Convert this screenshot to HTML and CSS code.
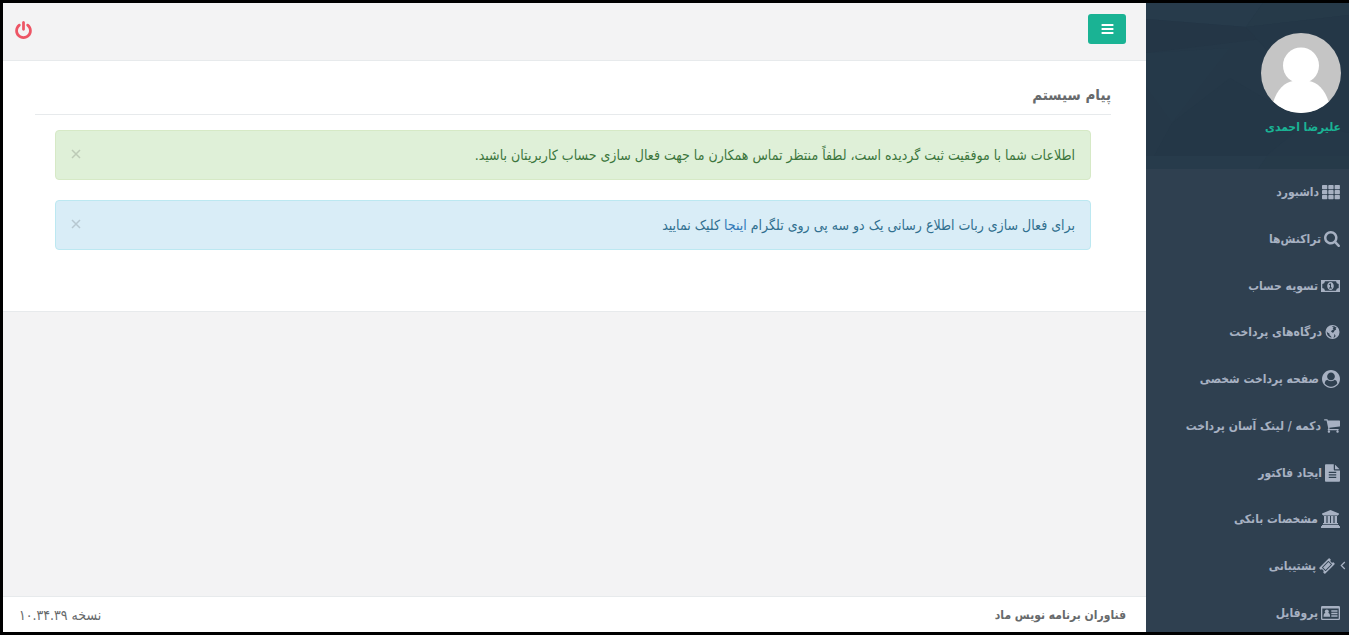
FILE: index.html
```html
<!DOCTYPE html>
<html lang="fa" dir="rtl">
<head>
  <meta charset="UTF-8">
  <meta name="viewport" content="width=device-width, initial-scale=1">
  <title>پیام سیستم</title>
  <link rel="stylesheet" href="styles.css">
</head>
<body>

  <aside class="sidebar">
    <div class="profile">
      <svg class="profile-bg" viewBox="0 0 203 166" preserveAspectRatio="none" aria-hidden="true">
        <rect width="203" height="166" fill="#253848"/>
        <path d="M0 0H117L100 24L0 16Z" fill="#273b4b"/>
        <path d="M117 0H203V12L100 24Z" fill="#263a49"/>
        <path d="M0 16L100 24L116 36L0 50Z" fill="#243646"/>
        <path d="M0 50L84 45L26 120L0 84Z" fill="#253949"/>
        <path d="M100 24L203 12V130L160 120L118 44Z" fill="#243747"/>
        <path d="M26 120L84 75L160 120L120 153H8Z" fill="#243747"/>
        <path d="M0 153H203V166H0Z" fill="#273b4b"/>
        <path d="M121 153H203V166H112Z" fill="#263a49"/>
      </svg>
      <svg class="avatar" viewBox="0 0 80 80" role="img" aria-label="علیرضا احمدی">
        <clipPath id="round"><circle cx="40" cy="40" r="40"/></clipPath>
        <g clip-path="url(#round)">
          <rect width="80" height="80" fill="#c5c5c5"/>
          <circle cx="40" cy="32.500" r="18" fill="#fff"/>
          <path d="M12 70C16 56 24 49 32 48H48C56 49 64 56 68 70V80H12Z" fill="#fff"/>
        </g>
      </svg>
      <a class="name" href="#">علیرضا احمدی</a>
    </div>

    <nav class="menu">
      <ul>
        <li><a href="#">
          <svg class="icon" viewBox="0 0 18 18"><rect x="0" y="2" width="5.300" height="4.200" rx=".7"/><rect x="6.300" y="2" width="5.300" height="4.200" rx=".7"/><rect x="12.600" y="2" width="5.300" height="4.200" rx=".7"/><rect x="0" y="7" width="5.300" height="4.200" rx=".7"/><rect x="6.300" y="7" width="5.300" height="4.200" rx=".7"/><rect x="12.600" y="7" width="5.300" height="4.200" rx=".7"/><rect x="0" y="12" width="5.300" height="4.200" rx=".7"/><rect x="6.300" y="12" width="5.300" height="4.200" rx=".7"/><rect x="12.600" y="12" width="5.300" height="4.200" rx=".7"/></svg>
          <span>داشبورد</span></a></li>
        <li><a href="#">
          <svg class="icon narrow" viewBox="64 128 1664 1664"><path d="M1216 832q0-185-131.500-316.500t-316.500-131.500-316.500 131.500-131.500 316.500 131.500 316.500 316.500 131.500 316.500-131.500 131.500-316.500zm512 832q0 52-38 90t-90 38q-54 0-90-38l-343-342q-179 124-399 124-143 0-273.500-55.500t-225-150-150-225-55.500-273.500 55.500-273.500 150-225 225-150 273.500-55.500 273.500 55.500 225 150 150 225 55.500 273.500q0 220-124 399l343 343q37 37 37 90z"/></svg>
          <span>تراکنش‌ها</span></a></li>
        <li><a href="#">
          <svg class="icon wide" viewBox="0 0 19 18"><path fill-rule="evenodd" d="M0 3H19V15H0ZM4 4.300Q3.700 6.800 1.300 7.100V10.900Q3.700 11.200 4 13.700H15Q15.300 11.200 17.700 10.900V7.100Q15.300 6.800 15 4.300Z"/><path fill-rule="evenodd" d="M9.500 5C11.400 5 12.800 6.800 12.800 9S11.400 13 9.500 13 6.200 11.200 6.200 9 7.600 5 9.500 5ZM9 6.500L7.700 7.600 8.300 8.300 9 7.800V10.500H8V11.400H11V10.500H10V6.500Z"/></svg>
          <span>تسویه حساب</span></a></li>
        <li><a href="#">
          <svg class="icon small" viewBox="0 0 16 16"><path fill-rule="evenodd" d="M8 .5A7.500 7.500 0 1 1 8 15.500A7.500 7.500 0 0 1 8 .5ZM7.200 1.900L9.800 1.800 12.500 3.400 11.300 4.200 12 5.400 10.200 6.300 9.300 8.300 8 8.800 6.300 7.200 7.900 5.900 9.200 5.200 8.100 4.300 9.300 3.400ZM1.800 7.300L3 8.700 4.700 9.700 4.900 11.300 6.600 12.700 6.900 14.200Q2 12.700 1.800 7.300ZM9.700 10.200L11.100 11.500 10.900 13.400 8.900 14.100 9.900 12.200Z"/></svg>
          <span>درگاه‌های پرداخت</span></a></li>
        <li><a href="#">
          <svg class="icon" viewBox="0 0 1792 1792"><path d="M1523 1339q-22-155-87.500-257.500t-184.500-118.500q-67 74-159.500 115.500t-195.500 41.500-195.500-41.500-159.500-115.500q-119 16-184.500 118.500t-87.500 257.500q106 150 271 237.500t356 87.500 356-87.500 271-237.500zm-243-699q0-159-112.500-271.500t-271.500-112.500-271.500 112.500-112.500 271.500 112.500 271.500 271.500 112.500 271.500-112.500 112.500-271.500zm512 256q0 182-71 347.500t-190.500 286-285.500 191.500-349 71q-182 0-348-71t-286-191-191-286-71-348 71-348 191-286 286-191 348-71 348 71 286 191 191 286 71 348z"/></svg>
          <span>صفحه پرداخت شخصی</span></a></li>
        <li><a href="#">
          <svg class="icon narrow" viewBox="64 128 1664 1664"><path d="M704 1536q0 52-38 90t-90 38-90-38-38-90 38-90 90-38 90 38 38 90zm896 0q0 52-38 90t-90 38-90-38-38-90 38-90 90-38 90 38 38 90zm128-1088v512q0 24-16.500 42.500t-40.500 21.500l-1044 122q13 60 13 70 0 16-24 64h920q26 0 45 19t19 45-19 45-45 19h-1024q-26 0-45-19t-19-45q0-11 8-31.500t16-36 21.500-40 15.500-29.500l-177-823h-204q-26 0-45-19t-19-45 19-45 45-19h256q16 0 28.500 6.500t19.500 15.500 13 24.500 8 26 5.500 29.500 4.500 26h1201q26 0 45 19t19 45z"/></svg>
          <span>دکمه / لینک آسان پرداخت</span></a></li>
        <li><a href="#">
          <svg class="icon small" viewBox="128 0 1536 1792"><path d="M1596 476q14 14 28 36h-472v-472q22 14 36 28zm-476 164h544v1056q0 40-28 68t-68 28h-1344q-40 0-68-28t-28-68v-1600q0-40 28-68t68-28h800v544q0 40 28 68t68 28zm160 736v-64q0-14-9-23t-23-9h-704q-14 0-23 9t-9 23v64q0 14 9 23t23 9h704q14 0 23-9t9-23zm0-256v-64q0-14-9-23t-23-9h-704q-14 0-23 9t-9 23v64q0 14 9 23t23 9h704q14 0 23-9t9-23zm0-256v-64q0-14-9-23t-23-9h-704q-14 0-23 9t-9 23v64q0 14 9 23t23 9h704q14 0 23-9t9-23z"/></svg>
          <span>ایجاد فاکتور</span></a></li>
        <li><a href="#">
          <svg class="icon wide" viewBox="0 0 19 18"><path d="M9.500 0L18 3.500V4.700H17V5.400H2V4.700H1V3.500ZM3 6H5.400V13H6.600V6H9V13H10V6H12.400V13H13.600V6H16V13H17V14.200H2V13H3ZM1 15H18V16L19 16.200V18H0V16.200L1 16Z"/></svg>
          <span>مشخصات بانکی</span></a></li>
        <li class="has-sub"><a href="#">
          <svg class="arrow" viewBox="0 0 6 9"><path d="M4.800 1L1.300 4.500 4.800 8" fill="none" stroke="currentColor" stroke-width="1.200"/></svg>
          <svg class="icon narrow" viewBox="0 0 17 17"><path fill-rule="evenodd" d="M10.200 .6Q10.800 0 11.400 .6L12.500 1.700A2 2 0 0 0 15.300 4.500L16.400 5.600Q17 6.200 16.400 6.800L6.800 16.400Q6.200 17 5.600 16.400L4.500 15.300A2 2 0 0 0 1.700 12.500L.6 11.400Q0 10.800 .6 10.200ZM9.500 3.500L3.500 9.500Q3 10 3.500 10.500L6.500 13.500Q7 14 7.500 13.500L13.500 7.500Q14 7 13.500 6.500L10.500 3.500Q10 3 9.500 3.500Z"/><path d="M10 4.300L12.700 7 7 12.700 4.300 10Z"/></svg>
          <span>پشتیبانی</span></a></li>
        <li><a href="#">
          <svg class="icon wide" viewBox="0 0 19 18"><path fill-rule="evenodd" d="M1.300 2H17.700Q19 2 19 3.200V14.800Q19 16 17.700 16H1.300Q0 16 0 14.800V3.200Q0 2 1.300 2ZM1.300 4.500V14.200Q1.300 14.700 1.800 14.700H17.200Q17.700 14.700 17.700 14.200V4.500Z"/><circle cx="5.800" cy="7.500" r="2"/><path d="M2.500 12.800Q2.500 9 4.400 9H7.200Q9.100 9 9.100 12.800ZM10.300 6.300H16.500V7.800H10.300ZM10.300 8.800H16.500V10.300H10.300ZM10.300 11.300H16.500V12.800H10.300Z"/></svg>
          <span>پروفایل</span></a></li>
      </ul>
    </nav>
  </aside>

  <div class="page">
    <header class="topbar">
      <button class="btn-menu" type="button" aria-label="منو">
        <svg viewBox="128 256 1536 1280"><path d="M1664 1344v128q0 26-19 45t-45 19h-1408q-26 0-45-19t-19-45v-128q0-26 19-45t45-19h1408q26 0 45 19t19 45zm0-512v128q0 26-19 45t-45 19h-1408q-26 0-45-19t-19-45v-128q0-26 19-45t45-19h1408q26 0 45 19t19 45zm0-512v128q0 26-19 45t-45 19h-1408q-26 0-45-19t-19-45v-128q0-26 19-45t45-19h1408q26 0 45 19t19 45z"/></svg>
      </button>
      <a class="logout" href="#" aria-label="خروج">
        <svg viewBox="128 0 1536 1664"><path d="M1664 896q0 156-61 298t-164 245-245 164-298 61-298-61-245-164-164-245-61-298q0-182 80.500-343t226.500-270q43-32 95.500-25t83.500 50q32 42 24.500 94.500t-49.500 84.500q-98 74-151.500 181t-53.500 228q0 104 40.500 198.500t109.500 163.500 163.500 109.500 198.500 40.500 198.500-40.500 163.500-109.500 109.500-163.500 40.500-198.500q0-121-53.500-228t-151.500-181q-42-32-49.500-84.500t24.500-94.500q31-43 84-50t95 25q146 109 226.500 270t80.500 343zm-640-768v640q0 52-38 90t-90 38-90-38-38-90v-640q0-52 38-90t90-38 90 38 38 90z"/></svg>
      </a>
    </header>

    <main class="content">
      <h1>پیام سیستم</h1>
      <div class="alerts">
        <div class="alert success">
          <p>اطلاعات شما با موفقیت ثبت گردیده است، لطفاً منتظر تماس همکارن ما جهت فعال سازی حساب کاربریتان باشید.</p>
          <button class="close" type="button" aria-label="بستن"><svg viewBox="0 0 10 10"><path d="M1 1L9 9M9 1L1 9"/></svg></button>
        </div>
        <div class="alert info">
          <p>برای فعال سازی ربات اطلاع رسانی یک دو سه پی روی تلگرام <a href="#">اینجا</a> کلیک نمایید</p>
          <button class="close" type="button" aria-label="بستن"><svg viewBox="0 0 10 10"><path d="M1 1L9 9M9 1L1 9"/></svg></button>
        </div>
      </div>
    </main>

    <footer class="footer">
      <strong>فناوران برنامه نویس ماد</strong>
      <span>نسخه ۱۰.۳۴.۳۹</span>
    </footer>
  </div>

</body>
</html>
```
FILE: styles.css
```css
* { margin:0; padding:0; box-sizing:border-box; }
body {
  display:flex; height:100vh; overflow:hidden;
  border:3px solid #000; border-right:none;
  font-family:'DejaVu Sans Condensed', 'DejaVu Sans', sans-serif; font-size:14px; line-height:18px;
  background:#f3f3f4; color:#676a6c;
}
a { text-decoration:none; }
button { border:none; cursor:pointer; font:inherit; }
svg { display:block; fill:currentColor; flex:none; }

/* sidebar */
.sidebar {
  display:flex; flex-direction:column; flex:none;
  width:203px; background:#2f4050; overflow:hidden;
}
.profile {
  position:relative; flex:none;
  display:flex; flex-direction:column; align-items:flex-start;
  height:166px; padding:30px 8px 0;
}
.profile-bg { position:absolute; inset:0; width:100%; height:100%; }
.avatar { position:relative; width:80px; height:80px; }
.name {
  position:relative; margin-top:5px;
  color:#1ab394; font-size:12px; font-weight:bold;
}
.menu { flex:1; display:flex; margin-bottom:-4px; }
.menu ul { flex:1; display:flex; flex-direction:column; list-style:none; }
.menu li { flex:1; display:flex; }
.menu a {
  flex:1; display:flex; align-items:center; gap:3px;
  padding:0 9px; color:#a7b1c2; font-size:12px; font-weight:bold;
  white-space:nowrap;
}
.menu a:hover { color:#fff; }
.menu .has-sub a { padding-right:3px; }
.icon { width:18px; height:18px; }
.icon.narrow { width:16px; }
.icon.small { width:15px; }
.icon.wide { width:19px; }
.arrow { width:6px; height:9px; margin-left:2px; }

/* page */
.page { flex:1; min-width:0; display:flex; flex-direction:column; }
.topbar {
  display:flex; justify-content:space-between; align-items:flex-start;
  height:58px; padding:11px 20px 0 12px;
  border-bottom:1px solid #e7eaec;
}
.btn-menu {
  display:flex; align-items:center; justify-content:center;
  width:38px; height:30px; border-radius:3px;
  background:#1ab394; color:#fff;
}
.btn-menu svg { width:13px; height:10px; }
.logout { padding-top:7px; color:#ed5565; }
.logout svg { width:17px; height:18px; }
.content {
  padding:20px 35px 61px 32px;
  background:#fff; border-bottom:1px solid #e7eaec;
}
h1 {
  padding-bottom:5px; border-bottom:1px solid #e7eaec;
  font-size:15px; line-height:28px; font-weight:bold;
}
.alerts {
  display:flex; flex-direction:column; gap:20px;
  padding:15px 20px 0;
}
.alert {
  display:flex; justify-content:space-between; align-items:center;
  padding:15px; border:1px solid; border-radius:4px;
}
.alert.success { background:#dff0d8; border-color:#d6e9c6; color:#3c763d; }
.alert.info { background:#d9edf7; border-color:#bce8f1; color:#31708f; }
.alert a { color:#337ab7; }
.close { padding-bottom:3px; background:none; color:#000; opacity:.15; }
.close svg { width:10px; height:10px; stroke:currentColor; stroke-width:1.5; }
.footer {
  display:flex; justify-content:space-between; align-items:center;
  height:36px; margin-top:auto; padding:0 20px 0 16px;
  background:#fff; border-top:1px solid #e7eaec;
}
.footer strong { font-size:12px; }
```
